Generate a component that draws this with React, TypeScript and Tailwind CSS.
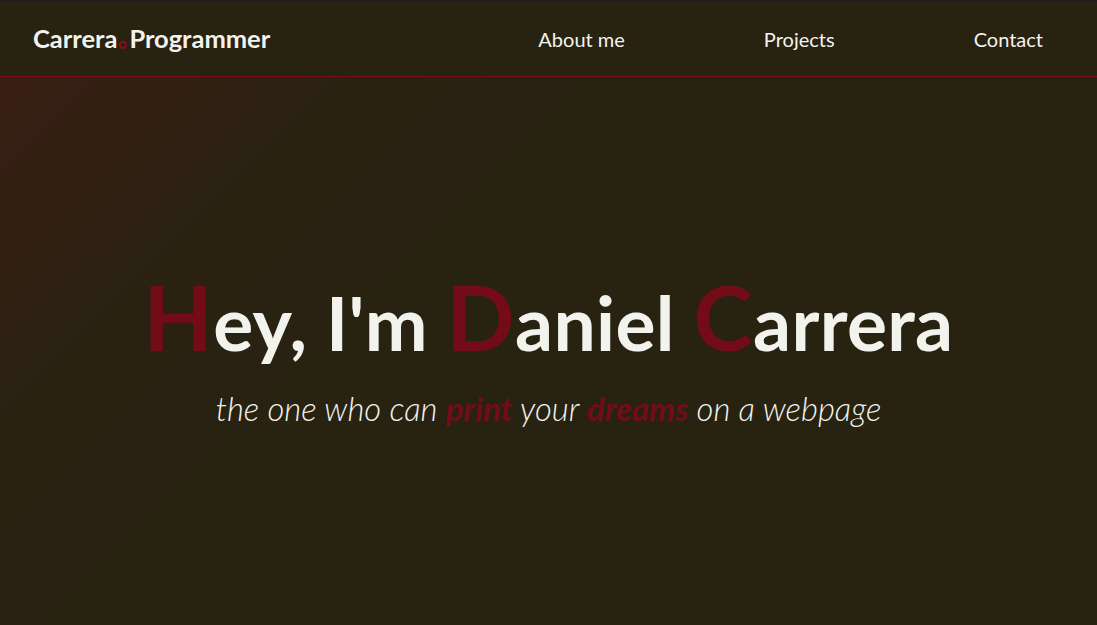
import React from 'react';

const links = ['About me', 'Projects', 'Contact'];

export default function App() {
  return (
    <div
      className="relative flex h-[625px] w-full flex-col overflow-hidden bg-[#282211] text-[#f3f3ee]"
      style={{ fontFamily: 'Lato, "Open Sans", sans-serif' }}
    >
      {/* background glow, top left */}
      <div className="pointer-events-none absolute inset-0 bg-[linear-gradient(135deg,#3d1d14_0%,#2c2112_22%,#282211_40%,#282211_85%,#25220f_100%)]" />

      <header className="relative z-10 flex h-[77px] items-center border-t-2 border-b border-t-[#1d1d27] border-b-[#7a0d18] bg-[#282211] pl-[33px] pr-[54px]">
        <div className="flex items-end text-[25.5px] font-bold leading-none">
          <span>Carrera</span>
          <span className="mx-[2px] mb-[3px] inline-block h-[8px] w-[8px] rounded-full border-[2px] border-[#850f1b]" />
          <span>Programmer</span>
        </div>
        <nav className="ml-auto flex items-center gap-[139px] text-[20px]">
          <a href="#about">{links[0]}</a>
          <a href="#projects">{links[1]}</a>
          <a href="#contact">{links[2]}</a>
        </nav>
      </header>

      <main className="relative z-10 flex flex-1 flex-col items-center pt-[194px]">
        <h1 className="text-[75px] font-bold leading-[1] tracking-[0.3px]">
          <span className="text-[90px] text-[#740c17]">H</span>ey, I'm{' '}
          <span className="text-[90px] text-[#740c17]">D</span>aniel{' '}
          <span className="text-[90px] text-[#740c17]">C</span>arrera
        </h1>
        <p className="mt-[23px] text-[32.8px] font-light italic">
          the one who can <b className="font-bold text-[#740c17]">print</b> your{' '}
          <b className="font-bold text-[#740c17]">dreams</b> on a webpage
        </p>
      </main>
    </div>
  );
}
